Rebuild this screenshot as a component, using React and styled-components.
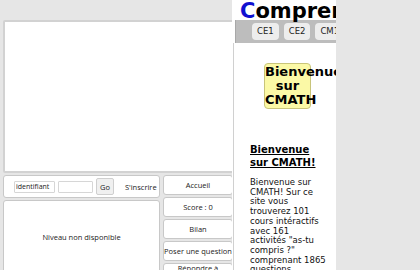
import React from 'react';
import styled, { createGlobalStyle } from 'styled-components';

const GlobalStyle = createGlobalStyle`
  html, body {
    margin: 0;
    padding: 0;
    background: #e6e6e6;
    overflow: hidden;
  }
`;

const Page = styled.div`
  display: flex;
  align-items: flex-start;
  width: 420px;
  height: 270px;
  overflow: hidden;
  font-family: "Open Sans", "DejaVu Sans", sans-serif;
`;

const LeftCol = styled.div`
  width: 234px;
  padding: 20px 0 0 3px;
  box-sizing: border-box;
  flex-shrink: 0;
`;

const Stage = styled.div`
  height: 153px;
  background: #fff;
  border: 2px solid #d2d2d2;
  border-radius: 2px;
  box-sizing: border-box;
`;

const BottomRow = styled.div`
  display: grid;
  grid-template-columns: 157px 70px;
  column-gap: 3px;
  margin-top: 2px;
`;

const LeftStack = styled.div`
  display: flex;
  flex-direction: column;
  gap: 2px;
`;

const LoginBar = styled.form`
  height: 23px;
  display: flex;
  align-items: center;
  gap: 3px;
  padding: 0 0 0 10px;
  background: #fff;
  border: 1px solid #c8c8c8;
  border-radius: 3px;
  box-sizing: border-box;
`;

const Input = styled.input`
  width: ${(p) => p.w}px;
  height: 12px;
  padding: 0 1px;
  font: 7px "Open Sans", sans-serif;
  color: #222;
  border: 1px solid #d6d6d6;
  border-radius: 1px;
  box-sizing: border-box;
  outline: none;
`;

const GoButton = styled.button`
  height: 17px;
  padding: 0 3px;
  font: 7.5px "Open Sans", sans-serif;
  color: #222;
  background: #f0f0f0;
  border: 1px solid #cfcfcf;
  border-radius: 2px;
`;

const Signup = styled.span`
  margin-left: 8px;
  font-size: 7.5px;
  color: #222;
`;

const LevelBox = styled.div`
  height: 72px;
  display: flex;
  align-items: center;
  justify-content: center;
  background: #fff;
  border: 1px solid #c8c8c8;
  border-radius: 3px 3px 0 0;
  font-size: 7.5px;
  color: #222;
`;

const SideMenu = styled.div`
  display: flex;
  flex-direction: column;
  gap: 2px;
`;

const SideButton = styled.button`
  height: 20px;
  padding: 0;
  font: 7.5px "Open Sans", sans-serif;
  line-height: 9px;
  color: #222;
  background: #fff;
  border: 1px solid #c8c8c8;
  border-radius: 3px;
  box-sizing: border-box;
  white-space: nowrap;
  overflow: hidden;
`;

const RightPanel = styled.div`
  width: 104px;
  height: 270px;
  margin-left: -2px;
  background: #fff;
  overflow: hidden;
  flex-shrink: 0;
  font-family: "DejaVu Sans", sans-serif;
`;

const Title = styled.h1`
  margin: 0;
  height: 20px;
  padding-left: 8px;
  font: bold 21px/22px "DejaVu Sans", sans-serif;
  color: #000;
  white-space: nowrap;
`;

const Blue = styled.span`
  color: #1010d0;
`;

const TabBar = styled.nav`
  height: 23px;
  margin-left: 3px;
  display: flex;
  align-items: center;
  gap: 5px;
  padding-left: 16px;
  background: #bdbdbd;
  border-left: 1px solid #a8a8a8;
  white-space: nowrap;
`;

const Tab = styled.span`
  padding: 4px 5px;
  font-size: 8.5px;
  line-height: 9px;
  color: #222;
  background: #ededed;
  border-radius: 4px;
`;

const Content = styled.div`
  margin-left: 1px;
  padding: 20px 0 0 16px;
  border-left: 1px solid #d0d0d0;
  height: 240px;
`;

const WelcomeBadge = styled.div`
  width: 45px;
  margin-left: 14px;
  padding: 1px 0;
  font: bold 13px/14px "DejaVu Sans", sans-serif;
  text-align: center;
  color: #000;
  background: #fbf9a6;
  border: 1px solid #c8c47a;
  border-radius: 4px;
  white-space: nowrap;
`;

const Heading = styled.h2`
  margin: 34px 0 0;
  font: bold 10px/13px "DejaVu Sans", sans-serif;
  text-decoration: underline;
  color: #000;
`;

const Paragraph = styled.p`
  margin: 9px 0 0;
  width: 76px;
  font: 8.5px/9.7px "DejaVu Sans", sans-serif;
  color: #111;
`;

export default function App() {
  return (
    <>
      <GlobalStyle />
      <Page>
        <LeftCol>
          <Stage />
          <BottomRow>
            <LeftStack>
              <LoginBar onSubmit={(e) => e.preventDefault()}>
                <Input w={41} defaultValue="identifiant" />
                <Input w={35} type="password" />
                <GoButton type="submit">Go</GoButton>
                <Signup>S'inscrire</Signup>
              </LoginBar>
              <LevelBox>Niveau non disponible</LevelBox>
            </LeftStack>
            <SideMenu>
              <SideButton>Accueil</SideButton>
              <SideButton>Score : 0</SideButton>
              <SideButton>Bilan</SideButton>
              <SideButton>Poser une question</SideButton>
              <SideButton>Répondre à<br />une question</SideButton>
            </SideMenu>
          </BottomRow>
        </LeftCol>
        <RightPanel>
          <Title>
            <Blue>C</Blue>omprendre les maths
          </Title>
          <TabBar>
            <Tab>CE1</Tab>
            <Tab>CE2</Tab>
            <Tab>CM1</Tab>
            <Tab>CM2</Tab>
          </TabBar>
          <Content>
            <WelcomeBadge>
              Bienvenue
              <br />
              sur
              <br />
              CMATH
            </WelcomeBadge>
            <Heading>
              Bienvenue
              <br />
              sur CMATH!
            </Heading>
            <Paragraph>
              Bienvenue sur CMATH! Sur ce site vous trouverez 101 cours intéractifs avec 161
              activités "as-tu compris ?" comprenant 1865 questions.
            </Paragraph>
          </Content>
        </RightPanel>
      </Page>
    </>
  );
}
